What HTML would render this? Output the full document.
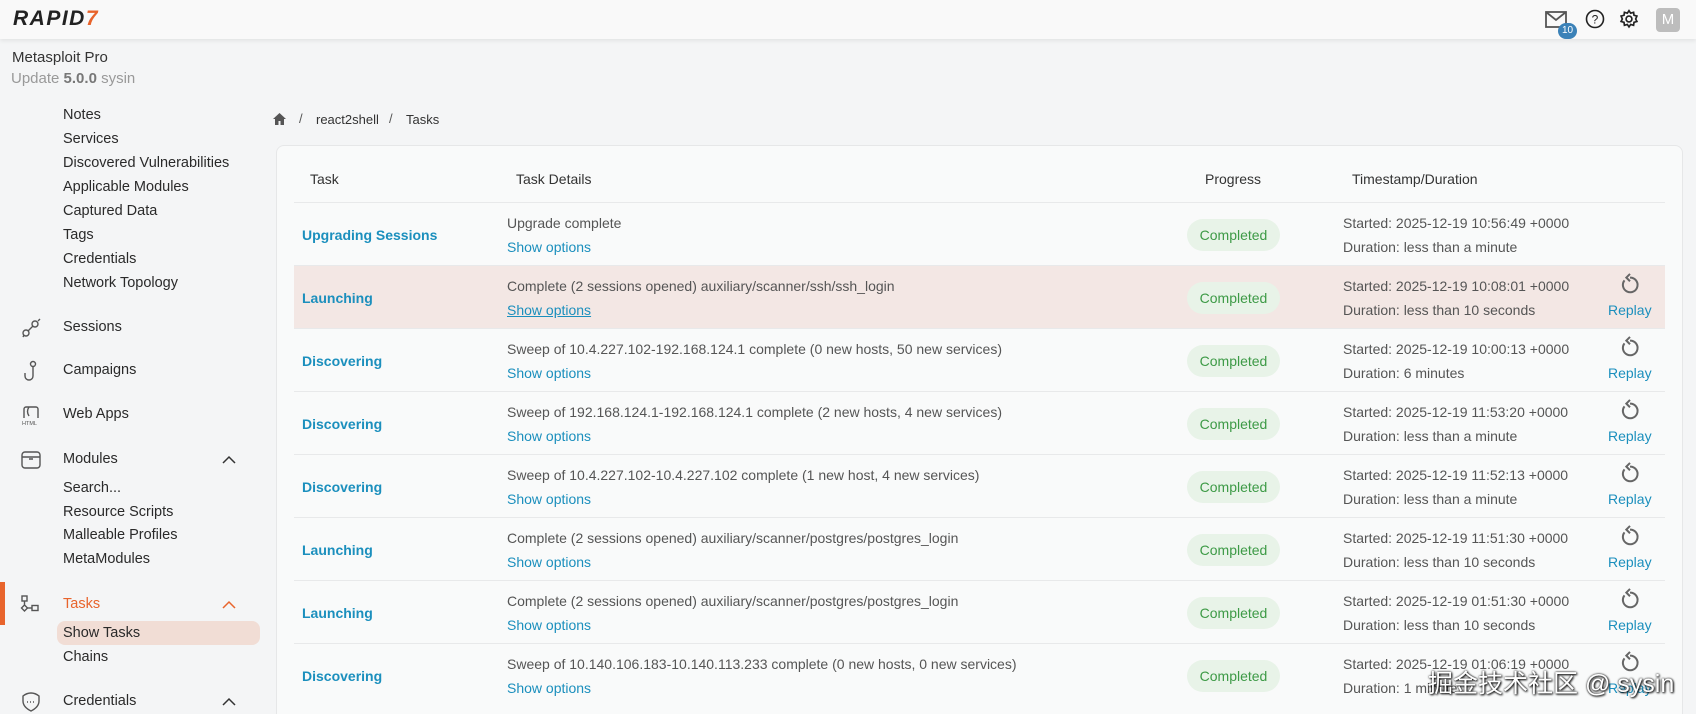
<!DOCTYPE html>
<html style="width:1696px;height:714px;overflow:hidden"><head><meta charset="utf-8"><style>
*{box-sizing:border-box;margin:0;padding:0}
body{width:1696px;height:714px;overflow:hidden;background:#f4f5f6;font-family:"Liberation Sans","Noto Sans CJK SC",sans-serif;color:#333;position:relative}
.hdr{position:absolute;left:0;top:0;width:1696px;height:39px;background:#f9f9f9;box-shadow:0 2px 4px rgba(0,0,0,.07)}
.logo{position:absolute;left:13px;top:7px;font:italic 900 21px "Liberation Sans",sans-serif;letter-spacing:1.5px;color:#222}
.logo span{color:#e8642c}
.abs{position:absolute;white-space:nowrap}
.side{font-size:14.5px;color:#2a2a2a}
.ic{position:absolute;stroke:#555;fill:none;stroke-width:1.4}
.card{position:absolute;left:276px;top:145px;width:1407px;height:620px;background:#f9fafa;border:1px solid #e6e7e8;border-radius:8px}
.th{font-size:14px;color:#333}
.row{position:absolute;left:294px;width:1371px;height:63px;border-top:1px solid #e8e9ea}
.row.hl{background:#f3e7e4}
.name{position:absolute;left:8px;top:24px;font-weight:bold;color:#1b8fbd;font-size:14px}
.d1{position:absolute;left:213px;top:12px;font-size:14px;color:#555}
.d2{position:absolute;left:213px;top:36px;font-size:14px;color:#1b8fbd}
.badge{position:absolute;left:893px;top:16px;width:93px;height:32px;border-radius:16px;background:#e8f3e8;color:#3d9a46;font-size:14px;text-align:center;line-height:32px}
.t1{position:absolute;left:1049px;top:12px;font-size:14px;color:#555}
.t2{position:absolute;left:1049px;top:36px;font-size:14px;color:#555}
.rp{position:absolute;left:1314px;top:36px;font-size:14px;color:#1b8fbd}
.ri{position:absolute;left:1325px;top:7px}
</style></head><body>
<div class="hdr"><div class="logo">RAPID<span>7</span></div>
<svg class="abs" style="left:1545px;top:11px" width="22" height="17" viewBox="0 0 22 17"><rect x="1" y="1" width="20" height="15" fill="none" stroke="#555" stroke-width="1.8"/><path d="M1 1l10 8 10-8" fill="none" stroke="#555" stroke-width="1.8"/></svg>
<div class="abs" style="left:1558px;top:23px;width:19px;height:16px;border-radius:8px;background:#3b82b8;color:#fff;font-size:10px;text-align:center;line-height:16px">10</div>
<svg class="abs" style="left:1585px;top:9px" width="20" height="20" viewBox="0 0 20 20"><circle cx="10" cy="10" r="8.5" fill="none" stroke="#222" stroke-width="1.6"/><text x="10" y="14.5" font-size="12" text-anchor="middle" font-family="Liberation Sans" fill="#222">?</text></svg>
<svg class="abs" style="left:1619px;top:9px" width="20" height="20" viewBox="0 0 24 24" fill="none" stroke="#222" stroke-width="2"><circle cx="12" cy="12" r="3.5"/><path d="M12 2l2 3 3.5-1 .5 3.5 3.5 1-1.5 3.5 1.5 3-3.5 1-.5 3.5-3.5-1-2 3-2-3-3.5 1-.5-3.5-3.5-1 1.5-3-1.5-3.5 3.5-1 .5-3.5 3.5 1z"/></svg>
<div class="abs" style="left:1656px;top:8px;width:24px;height:24px;border-radius:4px;background:#bdbdbd;color:#fff;font-size:15px;text-align:center;line-height:24px">M</div>
</div>
<div class="abs" style="left:12px;top:49px;font-size:15px;color:#333">Metasploit Pro</div>
<div class="abs" style="left:11px;top:70px;font-size:15px;color:#999">Update <b style="color:#777">5.0.0</b> sysin</div>
<div class="side">
<div class="abs" style="left:63px;top:107px">Notes</div>
<div class="abs" style="left:63px;top:131px">Services</div>
<div class="abs" style="left:63px;top:155px">Discovered Vulnerabilities</div>
<div class="abs" style="left:63px;top:179px">Applicable Modules</div>
<div class="abs" style="left:63px;top:203px">Captured Data</div>
<div class="abs" style="left:63px;top:227px">Tags</div>
<div class="abs" style="left:63px;top:251px">Credentials</div>
<div class="abs" style="left:63px;top:275px">Network Topology</div>
<div class="abs" style="left:63px;top:319px">Sessions</div>
<div class="abs" style="left:63px;top:362px">Campaigns</div>
<div class="abs" style="left:63px;top:406px">Web Apps</div>
<div class="abs" style="left:63px;top:451px">Modules</div>
<div class="abs" style="left:63px;top:480px">Search...</div>
<div class="abs" style="left:63px;top:504px">Resource Scripts</div>
<div class="abs" style="left:63px;top:527px">Malleable Profiles</div>
<div class="abs" style="left:63px;top:551px">MetaModules</div>
<div class="abs" style="left:0;top:582px;width:5px;height:43px;background:#e8642c"></div>
<div class="abs" style="left:63px;top:596px;color:#e8642c">Tasks</div>
<div class="abs" style="left:57px;top:621px;width:203px;height:24px;border-radius:8px;background:#f1ddd5"></div>
<div class="abs" style="left:63px;top:625px">Show Tasks</div>
<div class="abs" style="left:63px;top:649px">Chains</div>
<div class="abs" style="left:63px;top:693px">Credentials</div>
</div>
<svg class="ic" style="left:20px;top:317px" width="22" height="22" viewBox="0 0 22 22"><circle cx="6" cy="16" r="3"/><circle cx="15" cy="7" r="3"/><path d="M8 14l5-5M3 20l1-2M18 4l2-2"/></svg>
<svg class="ic" style="left:22px;top:360px" width="18" height="22" viewBox="0 0 18 22"><circle cx="11" cy="4" r="2.5"/><path d="M11 7v9a4 4 0 0 1-8 0v-3"/></svg>
<svg class="ic" style="left:20px;top:404px" width="22" height="22" viewBox="0 0 22 22"><path d="M4 14V5a2 2 0 0 1 2-2h10a2 2 0 0 1 2 2v9M9 3c-2 3-2 6 0 9"/><text x="2" y="21" font-size="5.5" stroke="none" fill="#555" font-family="Liberation Sans">HTML</text></svg>
<svg class="ic" style="left:20px;top:449px" width="22" height="22" viewBox="0 0 22 22"><rect x="2" y="3" width="18" height="16" rx="3"/><path d="M2 8h18M9 10h4"/></svg>
<svg class="ic" style="left:20px;top:594px" width="22" height="22" viewBox="0 0 22 22"><rect x="2" y="2" width="5" height="5"/><path d="M4.5 7v4M4.5 11l3 3-3 3-3-3z"/><rect x="12" y="11.5" width="6" height="5"/><path d="M7.5 14H12"/></svg>
<svg class="ic" style="left:20px;top:691px" width="22" height="22" viewBox="0 0 22 22"><path d="M3 5c5-4 11-4 16 0v5c0 5-4 8-8 10-4-2-8-5-8-10z"/><path d="M7 11h1M10 11h1M13 11h1"/></svg>
<svg class="abs" style="left:222px;top:455px" width="14" height="9" viewBox="0 0 14 9"><path d="M1 8l6-6 6 6" fill="none" stroke="#333" stroke-width="1.5"/></svg>
<svg class="abs" style="left:222px;top:600px" width="14" height="9" viewBox="0 0 14 9"><path d="M1 8l6-6 6 6" fill="none" stroke="#e8642c" stroke-width="1.5"/></svg>
<svg class="abs" style="left:222px;top:697px" width="14" height="9" viewBox="0 0 14 9"><path d="M1 8l6-6 6 6" fill="none" stroke="#333" stroke-width="1.5"/></svg>
<svg class="abs" style="left:273px;top:113px" width="13" height="12" viewBox="0 0 13 12"><path d="M6.5 0L0 6h2v6h3.5V8h2v4H11V6h2z" fill="#555"/></svg>
<div class="abs" style="left:299px;top:111px;font-size:13px;color:#555">/</div>
<div class="abs" style="left:316px;top:112px;font-size:13px;color:#333">react2shell</div>
<div class="abs" style="left:389px;top:111px;font-size:13px;color:#555">/</div>
<div class="abs" style="left:406px;top:112px;font-size:13px;color:#333">Tasks</div>
<div class="card"></div>
<div class="abs th" style="left:310px;top:171px">Task</div>
<div class="abs th" style="left:516px;top:171px">Task Details</div>
<div class="abs th" style="left:1205px;top:171px">Progress</div>
<div class="abs th" style="left:1352px;top:171px">Timestamp/Duration</div>

<div class="row" style="top:202px"><div class="name">Upgrading Sessions</div><div class="d1">Upgrade complete</div><div class="d2">Show options</div><div class="badge">Completed</div><div class="t1">Started: 2025-12-19 10:56:49 +0000</div><div class="t2">Duration: less than a minute</div></div>
<div class="row hl" style="top:265px"><div class="name">Launching</div><div class="d1">Complete (2 sessions opened) auxiliary/scanner/ssh/ssh_login</div><div class="d2" style="text-decoration:underline">Show options</div><div class="badge">Completed</div><div class="t1">Started: 2025-12-19 10:08:01 +0000</div><div class="t2">Duration: less than 10 seconds</div><svg class="ri" width="22" height="22" viewBox="0 0 24 24" fill="none" stroke="#666" stroke-width="2.2"><path d="M6 8a8 8 0 1 0 6-3"/><path d="M12 1l-4 4 4 4" /></svg><div class="rp">Replay</div></div>
<div class="row" style="top:328px"><div class="name">Discovering</div><div class="d1">Sweep of 10.4.227.102-192.168.124.1 complete (0 new hosts, 50 new services)</div><div class="d2">Show options</div><div class="badge">Completed</div><div class="t1">Started: 2025-12-19 10:00:13 +0000</div><div class="t2">Duration: 6 minutes</div><svg class="ri" width="22" height="22" viewBox="0 0 24 24" fill="none" stroke="#666" stroke-width="2.2"><path d="M6 8a8 8 0 1 0 6-3"/><path d="M12 1l-4 4 4 4" /></svg><div class="rp">Replay</div></div>
<div class="row" style="top:391px"><div class="name">Discovering</div><div class="d1">Sweep of 192.168.124.1-192.168.124.1 complete (2 new hosts, 4 new services)</div><div class="d2">Show options</div><div class="badge">Completed</div><div class="t1">Started: 2025-12-19 11:53:20 +0000</div><div class="t2">Duration: less than a minute</div><svg class="ri" width="22" height="22" viewBox="0 0 24 24" fill="none" stroke="#666" stroke-width="2.2"><path d="M6 8a8 8 0 1 0 6-3"/><path d="M12 1l-4 4 4 4" /></svg><div class="rp">Replay</div></div>
<div class="row" style="top:454px"><div class="name">Discovering</div><div class="d1">Sweep of 10.4.227.102-10.4.227.102 complete (1 new host, 4 new services)</div><div class="d2">Show options</div><div class="badge">Completed</div><div class="t1">Started: 2025-12-19 11:52:13 +0000</div><div class="t2">Duration: less than a minute</div><svg class="ri" width="22" height="22" viewBox="0 0 24 24" fill="none" stroke="#666" stroke-width="2.2"><path d="M6 8a8 8 0 1 0 6-3"/><path d="M12 1l-4 4 4 4" /></svg><div class="rp">Replay</div></div>
<div class="row" style="top:517px"><div class="name">Launching</div><div class="d1">Complete (2 sessions opened) auxiliary/scanner/postgres/postgres_login</div><div class="d2">Show options</div><div class="badge">Completed</div><div class="t1">Started: 2025-12-19 11:51:30 +0000</div><div class="t2">Duration: less than 10 seconds</div><svg class="ri" width="22" height="22" viewBox="0 0 24 24" fill="none" stroke="#666" stroke-width="2.2"><path d="M6 8a8 8 0 1 0 6-3"/><path d="M12 1l-4 4 4 4" /></svg><div class="rp">Replay</div></div>
<div class="row" style="top:580px"><div class="name">Launching</div><div class="d1">Complete (2 sessions opened) auxiliary/scanner/postgres/postgres_login</div><div class="d2">Show options</div><div class="badge">Completed</div><div class="t1">Started: 2025-12-19 01:51:30 +0000</div><div class="t2">Duration: less than 10 seconds</div><svg class="ri" width="22" height="22" viewBox="0 0 24 24" fill="none" stroke="#666" stroke-width="2.2"><path d="M6 8a8 8 0 1 0 6-3"/><path d="M12 1l-4 4 4 4" /></svg><div class="rp">Replay</div></div>
<div class="row" style="top:643px"><div class="name">Discovering</div><div class="d1">Sweep of 10.140.106.183-10.140.113.233 complete (0 new hosts, 0 new services)</div><div class="d2">Show options</div><div class="badge">Completed</div><div class="t1">Started: 2025-12-19 01:06:19 +0000</div><div class="t2">Duration: 1 minute</div><svg class="ri" width="22" height="22" viewBox="0 0 24 24" fill="none" stroke="#666" stroke-width="2.2"><path d="M6 8a8 8 0 1 0 6-3"/><path d="M12 1l-4 4 4 4" /></svg><div class="rp">Replay</div></div>
<div class="abs" style="left:1428px;top:664px;font-size:25px;color:#fff;text-shadow:0 0 2px #000,1px 1px 2px #000">掘金技术社区 @ sysin</div>
</body></html>
